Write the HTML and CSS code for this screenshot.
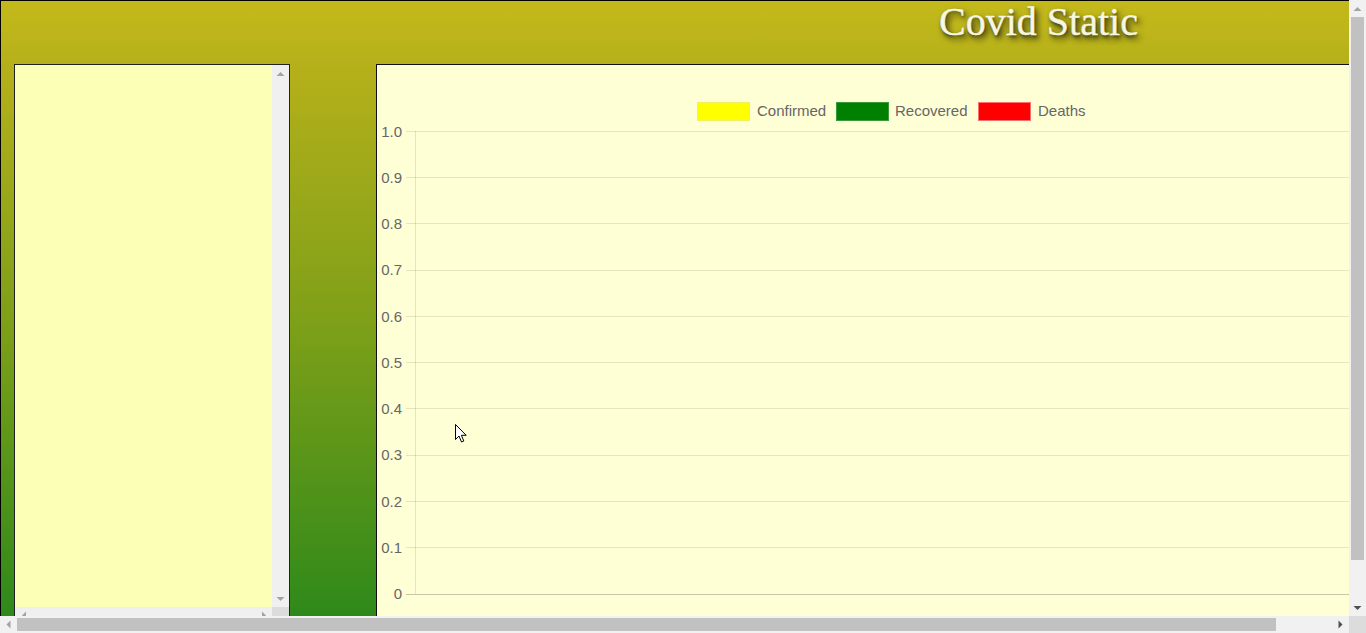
FILE: index.html
```html
<!DOCTYPE html>
<html lang="en">
<head>
<meta charset="utf-8">
<title>Covid Static</title>
<link rel="stylesheet" href="styles.css">
</head>
<body>
<div class="screen">
  <div class="viewport">
    <div class="site">
      <header class="header">
        <h1 class="title">Covid Static</h1>
      </header>
      <main class="content">
        <section class="list-panel">
          <div class="list-body"></div>
          <div class="list-vscroll">
            <svg class="arrow" width="17" height="17" viewBox="0 0 17 17"><polygon points="4.5,11 12.5,11 8.5,7" fill="#a3a3a3"/></svg>
            <span class="spacer"></span>
            <svg class="arrow" width="17" height="17" viewBox="0 0 17 17"><polygon points="4.5,7 12.5,7 8.5,11" fill="#a3a3a3"/></svg>
          </div>
          <div class="list-hscroll">
            <svg class="arrow" width="17" height="17" viewBox="0 0 17 17"><polygon points="7,8.5 11,4.5 11,12.5" fill="#a3a3a3"/></svg>
            <span class="spacer"></span>
            <svg class="arrow" width="17" height="17" viewBox="0 0 17 17"><polygon points="11,8.5 7,4.5 7,12.5" fill="#a3a3a3"/></svg>
          </div>
          <div class="list-corner"></div>
        </section>
        <section class="chart-panel">
          <svg class="chart" width="1700" height="560" viewBox="0 0 1700 560" font-family="'Liberation Sans', Arial, sans-serif" font-size="15">
            <g class="legend">
              <rect x="320.5" y="37.5" width="52" height="18" fill="#ffff00" stroke="#f0f060"/>
              <text x="380" y="51" fill="#666">Confirmed</text>
              <rect x="459.5" y="37.5" width="52" height="18" fill="#008000" stroke="#3a9a3a"/>
              <text x="518" y="51" fill="#666">Recovered</text>
              <rect x="601.5" y="37.5" width="52" height="18" fill="#ff0000" stroke="#ff7070"/>
              <text x="661" y="51" fill="#666">Deaths</text>
            </g>
            <g class="grid" stroke="rgba(0,0,0,0.1)" stroke-width="1" shape-rendering="crispEdges">
              <line x1="29" y1="66.5" x2="1700" y2="66.5"/>
              <line x1="29" y1="112.5" x2="1700" y2="112.5"/>
              <line x1="29" y1="158.5" x2="1700" y2="158.5"/>
              <line x1="29" y1="205.5" x2="1700" y2="205.5"/>
              <line x1="29" y1="251.5" x2="1700" y2="251.5"/>
              <line x1="29" y1="297.5" x2="1700" y2="297.5"/>
              <line x1="29" y1="343.5" x2="1700" y2="343.5"/>
              <line x1="29" y1="390.5" x2="1700" y2="390.5"/>
              <line x1="29" y1="436.5" x2="1700" y2="436.5"/>
              <line x1="29" y1="482.5" x2="1700" y2="482.5"/>
              <line x1="38.5" y1="66" x2="38.5" y2="529"/>
            </g>
            <line x1="29" y1="529.5" x2="1700" y2="529.5" stroke="rgba(0,0,0,0.22)" shape-rendering="crispEdges"/>
            <g class="ticks" fill="#666" text-anchor="end">
              <text x="25" y="71.5">1.0</text>
              <text x="25" y="117.8">0.9</text>
              <text x="25" y="164">0.8</text>
              <text x="25" y="210.3">0.7</text>
              <text x="25" y="256.6">0.6</text>
              <text x="25" y="302.9">0.5</text>
              <text x="25" y="349.1">0.4</text>
              <text x="25" y="395.4">0.3</text>
              <text x="25" y="441.7">0.2</text>
              <text x="25" y="487.9">0.1</text>
              <text x="25" y="534.2">0</text>
            </g>
          </svg>
        </section>
      </main>
    </div>
  </div>
  <div class="vbar">
    <svg class="arrow" width="17" height="17" viewBox="0 0 17 17"><polygon points="4.5,11 12.5,11 8.5,7" fill="#a3a3a3"/></svg>
    <div class="vthumb"></div>
    <span class="spacer"></span>
    <svg class="arrow" width="17" height="17" viewBox="0 0 17 17"><polygon points="4.5,7 12.5,7 8.5,11" fill="#505050"/></svg>
  </div>
  <div class="hbar">
    <svg class="arrow" width="17" height="17" viewBox="0 0 17 17"><polygon points="6.5,8.5 10.5,4.5 10.5,12.5" fill="#a3a3a3"/></svg>
    <div class="hthumb"></div>
    <span class="spacer"></span>
    <svg class="arrow" width="17" height="17" viewBox="0 0 17 17"><polygon points="10.5,8.5 6.5,4.5 6.5,12.5" fill="#505050"/></svg>
  </div>
  <div class="corner"></div>
  <svg class="cursor" width="13" height="21" viewBox="0 0 13 21"><path d="M0.5 0.5 L0.5 15.5 L4 12 L6.5 18 L8.8 17 L6.4 11.3 L11.2 11.3 Z" fill="#fff" stroke="#000" stroke-width="1" stroke-linejoin="round"/></svg>
</div>
</body>
</html>
```

FILE: styles.css
```css
* { box-sizing: border-box; }
html, body { margin: 0; padding: 0; }
body {
  width: 1366px;
  height: 633px;
  overflow: hidden;
  font-family: "Liberation Sans", Arial, sans-serif;
}
.screen {
  position: relative;
  display: grid;
  grid-template-columns: 1349px 17px;
  grid-template-rows: 616px 17px;
  width: 1366px;
  height: 633px;
  overflow: hidden;
}
.viewport {
  overflow: hidden;
  grid-column: 1;
  grid-row: 1;
}
.site {
  width: 2076px;
  height: 700px;
  border-top: 1px solid #000;
  border-left: 1px solid #000;
  background: linear-gradient(to bottom, #c4b91a 0px, #b4b01a 70px, #7c9f18 330px, #2e891a 616px, #25861a 700px);
}
.header {
  height: 63px;
  text-align: center;
  padding-top: 1px;
}
.title {
  margin: 0;
  font-family: "Liberation Serif", "Times New Roman", serif;
  font-weight: normal;
  font-size: 40px;
  line-height: 40px;
  color: #f6f6e2;
  -webkit-text-stroke: 0.4px #f6f6e2;
  text-shadow: 3px 4px 6px #262610, 1px 2px 3px rgba(30,30,0,0.6);
}
.content {
  display: flex;
  align-items: flex-start;
  gap: 86px;
  padding-left: 13px;
}
.list-panel {
  flex: 0 0 276px;
  width: 276px;
  height: 561px;
  border: 1px solid #222;
  display: grid;
  grid-template-columns: 257px 17px;
  grid-template-rows: 542px 17px;
  background: #fcffb6;
}
.list-body { background: #fcffb6; }
.list-vscroll {
  background: #f0f0f0;
  display: flex;
  flex-direction: column;
}
.list-hscroll {
  background: #f0f0f0;
  display: flex;
  flex-direction: row;
}
.list-corner { background: #dcdcdc; }
.spacer { flex: 1; }
.arrow { display: block; flex: 0 0 17px; }
.chart-panel {
  flex: 1;
  height: 560px;
  border: 1px solid #111;
  border-right: none;
  background: #ffffd6;
}
.chart { display: block; }
.vbar {
  grid-column: 2;
  grid-row: 1;
  background: #f1f1f1;
  display: flex;
  flex-direction: column;
}
.vthumb {
  height: 543px;
  margin: 0 2px;
  background: #c1c1c1;
}
.hbar {
  grid-column: 1;
  grid-row: 2;
  background: #f1f1f1;
  display: flex;
  flex-direction: row;
  align-items: center;
}
.hthumb {
  width: 1259px;
  height: 13px;
  background: #c1c1c1;
}
.corner {
  grid-column: 2;
  grid-row: 2;
  background: #dcdcdc;
}
.cursor {
  position: absolute;
  left: 455px;
  top: 424px;
}
```
